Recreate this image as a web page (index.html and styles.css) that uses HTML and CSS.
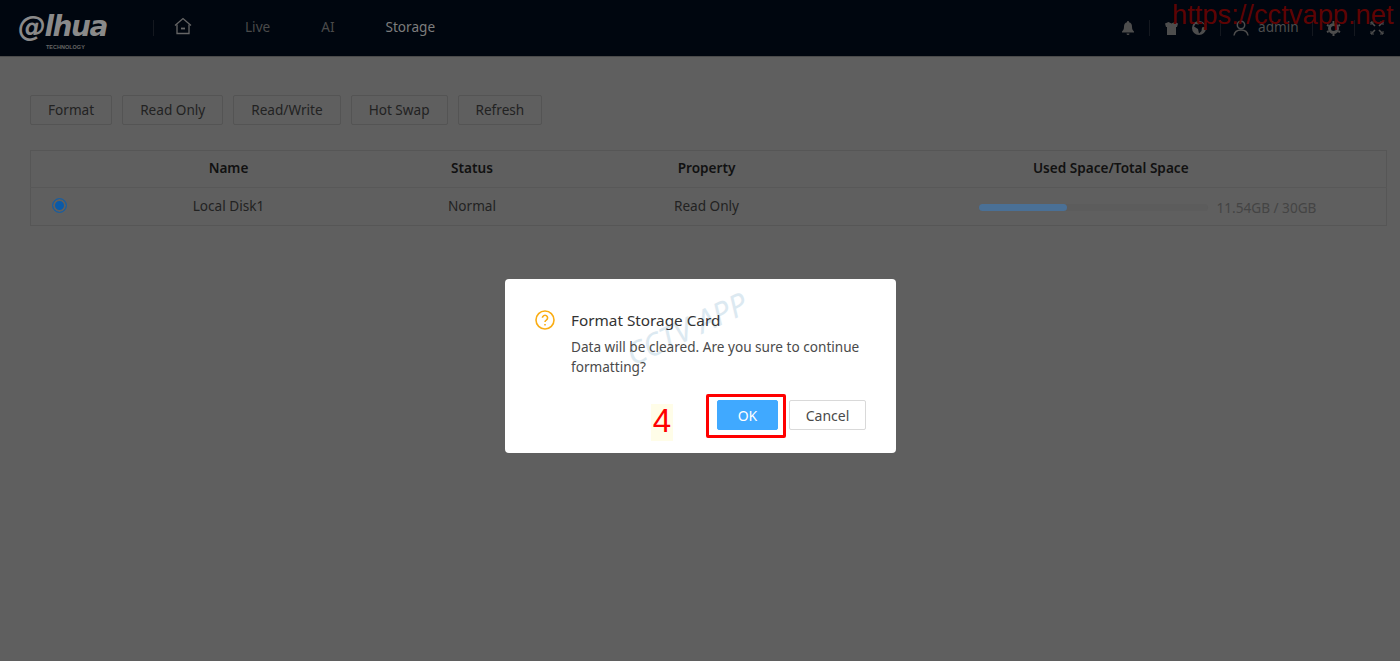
FILE: index.html
```html
<!doctype html>
<html>
<head>
  <link rel="stylesheet" href="styles.css">
</head>
<body>
  <div id="header">
    <div class="logo"><span class="logo-mark">@lhua</span><span class="logo-sub">TECHNOLOGY</span></div>
    <span class="sep"></span>
    <svg class="nav-home" width="18" height="18" viewBox="0 0 18 18" fill="none" stroke="currentColor" stroke-width="1.3">
      <path d="M1 8.500 9 1.500l8 7"/><path d="M3 7.500v9h12v-9"/><path d="M7 11.500h4" stroke-width="1.800"/>
    </svg>
    <a class="nav-item nav-live">Live</a>
    <a class="nav-item nav-ai">AI</a>
    <a class="nav-item nav-active">Storage</a>
    <div id="header-right">
      <svg class="tool" width="14" height="14" viewBox="0 0 14 14" fill="currentColor"><path d="M7 0a1 1 0 0 1 1 1.200c2 .5 3 2.200 3 4.300 0 2.500.6 3.800 2 5v1H1v-1c1.400-1.200 2-2.500 2-5 0-2.100 1-3.800 3-4.300A1 1 0 0 1 7 0ZM5.500 12.500h3a1.500 1.500 0 0 1-3 0Z"/></svg>
      <span class="sep sep-a"></span>
      <svg class="tool tool-shirt" width="13" height="13" viewBox="0 0 13 13" fill="currentColor"><path d="M0 1.500 3.500 0 6.500 1.500 9.500 0 13 1.500 12 5h-1v8H2V5H1Z"/></svg>
      <svg class="tool tool-globe" width="14" height="14" viewBox="0 0 14 14" fill="currentColor"><path fill-rule="evenodd" d="M7 0a7 7 0 1 1 0 14A7 7 0 0 1 7 0ZM8.500 1 6.500 3.500 3.500 3 2 5.500 6 8l1 4.500L9.500 10l.5-3.500L13 5.500 11.500 3Z"/></svg>
      <span class="sep sep-b"></span>
      <svg class="tool tool-user" width="16" height="16" viewBox="0 0 16 16" fill="none" stroke="currentColor" stroke-width="1.500"><circle cx="8" cy="5" r="3.700"/><path d="M1 15.500c.5-3.500 3-5.500 7-5.500s6.500 2 7 5.500"/></svg>
      <span class="user-name">admin</span>
      <span class="sep sep-c"></span>
      <svg class="tool tool-gear" width="15" height="15" viewBox="0 0 15 15" fill="none" stroke="currentColor"><circle cx="7.500" cy="7.500" r="4" stroke-width="3"/><path d="M7.500 0v2M7.500 13v2M1 3.800l1.700 1M12.300 10.200l1.700 1M1 11.200l1.700-1M12.300 4.800l1.700-1" stroke-width="2"/></svg>
      <span class="sep sep-d"></span>
      <svg class="tool tool-full" width="14" height="14" viewBox="0 0 14 14" fill="none" stroke="currentColor" stroke-width="1.600"><path d="M1 1l4 4M13 1 9 5M1 13l4-4M13 13 9 9"/><path d="M1 4V1h3M10 1h3v3M1 10v3h3M10 13h3v-3" stroke-width="1"/></svg>
    </div>
    <span class="site-mark">https://cctvapp.net</span>
  </div>

  <div id="content">
    <div class="toolbar">
      <button class="btn">Format</button>
      <button class="btn">Read Only</button>
      <button class="btn">Read/Write</button>
      <button class="btn">Hot Swap</button>
      <button class="btn">Refresh</button>
    </div>
    <table id="disk-table">
      <tr>
        <th class="col-radio"></th>
        <th class="col-name">Name</th>
        <th class="col-status">Status</th>
        <th class="col-prop">Property</th>
        <th>Used Space/Total Space</th>
      </tr>
      <tr>
        <td><span class="radio"></span></td>
        <td>Local Disk1</td>
        <td>Normal</td>
        <td>Read Only</td>
        <td>
          <div class="usage">
            <div class="track"><div class="fill" style="width: 38.5%"></div></div>
            <span class="usage-text">11.54GB / 30GB</span>
          </div>
        </td>
      </tr>
    </table>
  </div>

  <div id="modal-wrap">
    <div class="dialog">
      <span class="watermark">CCTV APP</span>
      <div class="dialog-main">
        <svg class="ask-icon" width="20" height="20" viewBox="0 0 20 20" fill="none" stroke="#faad14" stroke-width="1.600">
          <circle cx="10" cy="10" r="9"/>
          <path d="M7.400 7.800a2.600 2.600 0 1 1 3.900 2.300c-.9.500-1.300 1-1.300 2"/>
          <path d="M10 14v1.400"/>
        </svg>
        <div class="dialog-text">
          <div class="dialog-title">Format Storage Card</div>
          <div class="dialog-body">Data will be cleared. Are you sure to continue formatting?</div>
        </div>
      </div>
      <div class="dialog-btns">
        <button class="dlg-btn dlg-ok">OK</button>
        <button class="dlg-btn">Cancel</button>
      </div>
      <span class="step-num">4</span>
      <span class="step-box"></span>
    </div>
  </div>
</body>
</html>
```

FILE: styles.css
```css
* {
  box-sizing: border-box;
}
html, body {
  height: 100%;
}
body {
  margin: 0;
  background: #5f5f5f;
  color: #222;
  font-family: "Noto Sans", "Open Sans", sans-serif;
  font-size: 13.6px;
  overflow: hidden;
}
#header {
  position: relative;
  display: flex;
  align-items: center;
  height: 57px;
  border-bottom: 1px solid #4a4a4a;
  background: #00060f;
  color: #4a4a4a;
}
.logo {
  position: relative;
  width: 153px;
  padding-left: 18px;
  flex: none;
  margin-top: -3px;
}
.logo-mark {
  font-family: "DejaVu Sans", sans-serif;
  font-size: 28px;
  font-weight: bold;
  font-style: italic;
  letter-spacing: -1.5px;
  color: #8a8a8a;
}
.logo-sub {
  position: absolute;
  left: 46px;
  top: 34px;
  font-family: "Liberation Sans", sans-serif;
  font-size: 5.500px;
  font-weight: bold;
  color: #666;
}
.sep {
  flex: none;
  width: 1px;
  height: 16px;
  background: #14181f;
}
.nav-home {
  margin-left: 20px;
  margin-top: -4px;
  color: #666;
}
.nav-item {
  margin-top: -3px;
  text-align: center;
}
.nav-live {
  margin-left: 53px;
}
.nav-ai {
  margin-left: 51px;
}
.nav-active {
  margin-left: 51px;
  color: #7d7d7d;
}
#header-right {
  position: absolute;
  left: 1121px;
  top: 0;
  height: 56px;
  display: flex;
  align-items: center;
  color: #4d4d4d;
}
.tool {
  flex: none;
}
.sep-a {
  margin-left: 14px;
}
.tool-shirt {
  margin-left: 15px;
}
.tool-globe {
  margin-left: 14px;
}
.sep-b {
  margin-left: 14px;
}
.tool-user {
  margin-left: 12px;
}
.user-name {
  margin-left: 9px;
  margin-top: -3px;
}
.sep-c {
  margin-left: 13px;
}
.tool-gear {
  margin-left: 13px;
}
.sep-d {
  margin-left: 13px;
}
.tool-full {
  margin-left: 15px;
}
.site-mark {
  position: absolute;
  left: 1172px;
  top: 0;
  font-family: "Liberation Sans", sans-serif;
  font-size: 27.300px;
  line-height: 30px;
  color: #5e0303;
}
#content {
  padding: 38px 13px 0 30px;
}
.toolbar {
  display: flex;
  gap: 10px;
}
.btn {
  height: 30px;
  padding: 0 17px 2px;
  border: 1px solid #545454;
  border-radius: 2px;
  background: #5f5f5f;
  color: #222;
  font: inherit;
}
#disk-table {
  width: 100%;
  margin-top: 25px;
  border-collapse: collapse;
  table-layout: fixed;
  border: 1px solid #565656;
}
#disk-table th {
  height: 37px;
  padding: 0 0 3px;
  font-weight: 600;
  color: #111;
  border-bottom: 1px solid #585858;
}
#disk-table td {
  height: 38px;
  padding: 0 0 2px;
  text-align: center;
}
.col-radio {
  width: 60px;
}
.col-name {
  width: 276px;
}
.col-status {
  width: 211px;
}
.col-prop {
  width: 258px;
}
.radio {
  display: block;
  width: 15px;
  height: 15px;
  margin-left: 21px;
  border: 1px solid #1c5f9f;
  border-radius: 50%;
  background: #0a5aa8;
  box-shadow: inset 0 0 0 2px #5f5f5f;
}
.usage {
  display: flex;
  align-items: center;
  padding-left: 143px;
  margin-top: 3px;
}
.track {
  width: 229px;
  height: 7px;
  border-radius: 4px;
  background: #5c5c5c;
}
.fill {
  height: 100%;
  border-radius: 4px;
  background: #4a7096;
}
.usage-text {
  margin-left: 9px;
  color: #444;
}
#modal-wrap {
  position: fixed;
  inset: 0;
  display: flex;
  justify-content: center;
  align-items: flex-start;
  padding: 279px 0 0 1px;
}
.dialog {
  position: relative;
  width: 391px;
  height: 174px;
  padding: 31px 30px 0 30px;
  border-radius: 4px;
  background: #fff;
  color: #4a4a4a;
  overflow: hidden;
}
.dialog-main {
  position: relative;
  display: flex;
  gap: 16px;
  margin-right: -10px;
}
.ask-icon {
  flex: none;
}
.dialog-title {
  margin-top: -1px;
  font-size: 15.300px;
  line-height: 22px;
  color: #333;
}
.dialog-body {
  margin-top: 6px;
  line-height: 20px;
}
.dialog-btns {
  position: relative;
  display: flex;
  justify-content: flex-end;
  gap: 11px;
  margin-top: 23px;
}
.dlg-btn {
  width: 77px;
  height: 30px;
  padding: 0;
  border: 1px solid #d9d9d9;
  border-radius: 2px;
  background: #fff;
  color: #4a4a4a;
  font: inherit;
  font-size: 14px;
}
.dlg-ok {
  width: 61px;
  border-color: #40a9ff;
  background: #40a9ff;
  color: #fff;
}
.watermark {
  position: absolute;
  left: 117px;
  top: 28px;
  font-size: 31px;
  font-style: italic;
  white-space: nowrap;
  color: #dce9f1;
  transform: rotate(-25deg);
}
.step-num {
  position: absolute;
  left: 146px;
  top: 125px;
  width: 22px;
  height: 37px;
  background: #fffde8;
  color: #ff0000;
  font-family: "Liberation Sans", sans-serif;
  font-size: 33px;
  line-height: 33px;
  text-align: center;
}
.step-box {
  position: absolute;
  left: 201px;
  top: 115px;
  width: 80px;
  height: 44px;
  border: 3px solid #ff0000;
  border-radius: 2px;
}
```
